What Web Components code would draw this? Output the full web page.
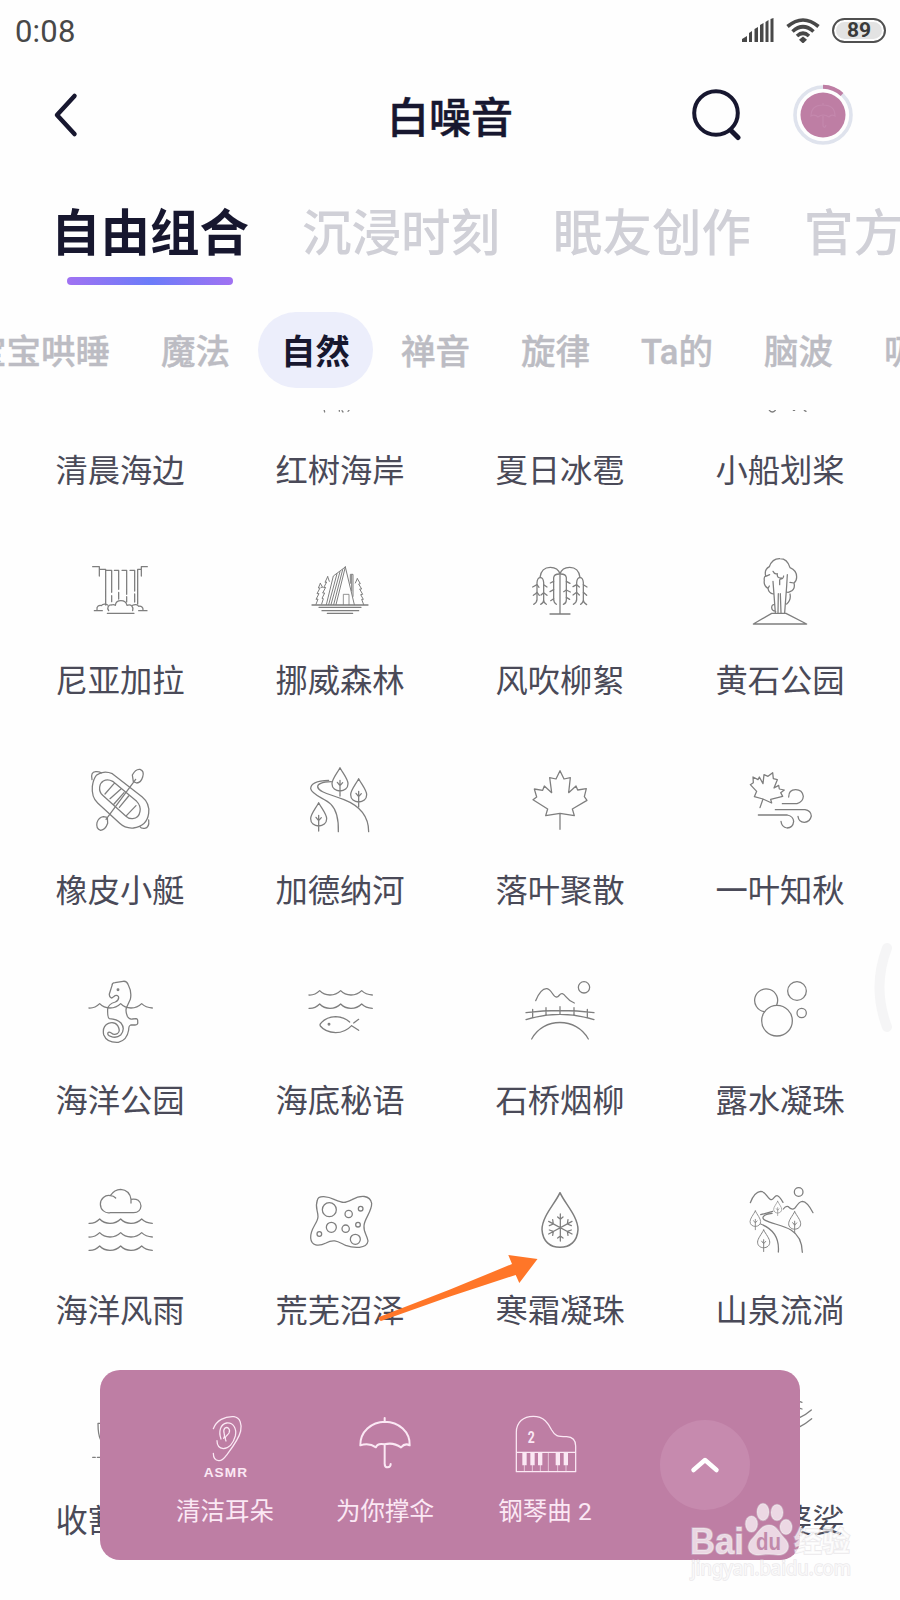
<!DOCTYPE html>
<html lang="zh-CN">
<head>
<meta charset="utf-8">
<title>白噪音</title>
<style>
  body {
    margin: 0;
    width: 900px;
    height: 1600px;
    overflow: hidden;
    background: #fefefe;
    color: #17172f;
    font-family: Roboto, "Noto Sans CJK SC", sans-serif;
  }
</style>
</head>
<body>
<noise-app></noise-app>

<script>
// viewBox origin + drawing, every icon is 240x240 units shown at 80px
const tree = (x, y, s = 1) => `<g transform="translate(${x} ${y}) scale(${s})">
  <path d="M0 0C-8 16-24 34-24 48C-24 62-13 70 0 70S24 62 24 48C24 34 8 16 0 0zM0 38V85M-8 44L0 54L8 45"/></g>`;
const waves = (x, y) => `<path d="M${x} ${y}q18 1 32-13q12 13 31 13t32-13q12 13 31 13t32-13q12 12 32 13"/>`;

const icons = {
  mangrove: ["900 -180", `<path d="M972 28l2 8M1018 28v6M1026 32l3 4M1044 34l3-3"/>`],
  rowing: ["870 -180", `<path d="M958 31q9 10 18 0M1030 31h4M1063 31l5 3"/>`],
  falls: ["240 450", `<path d="M278 500h20v28M298 508h19v107M442 500h-18v28M424 508h-11v104M320 511h15v66M335 587v18M343 511h13v57M356 577v20M366 511h14v72M380 590v16M390 511h14v62M404 582v24"/>
    <path d="M283 632h24M291 630c-2-12 7-15 13-13c5-6 14-5 19-2M326 632c-6-9-1-18 9-17c4-2 8-1 11 1c1-10 8-14 17-14c10 0 16 6 18 14c13-4 20 4 17 16M322 640h80M398 616c6-4 15-3 18 3c8-2 14 4 13 11M416 632h25"/>`],
  cabin: ["900 450", `<path d="M936 615h168M957 622h126M966 632h110M982 640h76"/>
    <path stroke-width="3" d="M1036 501L1063 614M1036 501L1008 614M1036 501L1000 528L979 614M1011 521L986 614M1020 515L993 614M1028 509L1001 614M1051 550v-27h8v66M1055 525v48"/>
    <path stroke-width="2.500" d="M1030 614v-31h17v31"/>
    <path stroke-width="3" d="M983 530l-8 17l5-1l-9 17l6-1l-9 17l6 0l-8 16l4 1l-5 16M961 550l-6 14l5 0l-9 17l6 0l-9 17l6-1l-6 16M983 530l5 14M961 550l7 12l-5 0M1072 536l-6 13M1072 536l9 15l-5 1l9 15l-6 0l9 16l-6 1l8 14l-5 0l6 16"/>`],
  willow: ["210 450", `<path d="M300 642h60M330 642V522M330 522q-6-20-29-20q-27 0-31 30M330 522q6-20 29-20q27 0 31 30"/>
    <path d="M261 600v-52q1-15 10-15t10 15v52q0 8 8 13M261 598q0 10-10 15M281 600q0 9-9 13M311 600v-67q1-11 17-11M311 597q0 11 8 16M349 600v-67q-1-11-17-11M349 600q0 10-9 13M380 600v-52q1-15 10-15t10 15v52q0 8 10 14M380 598q0 10-10 15M400 600q-1 9-8 13"/>
    <path d="M248 561l13-7l6 8M281 554l10 7M250 586q8-5 11-9l7 9M273 585l8-7l10 8M301 549l10-5M300 575l11-6M302 602l9-6M349 544l11 6M341 575l8-5l12 6M349 592l10 6M369 560l11-6l8 7M400 554l11 7M369 585l11-8l8 8M400 577l10 9"/>`],
  geyser: ["870 450", `<path d="M910 672L965 640H1008L1070 672zM976 638L969 544M984 638l1-57M993 638l-2-57M1004 638l6-80l2-34M989 540v14M970 582q-14-3-16-17q-14-8-11-24q-2-10 4-14q-5-18 11-27q9-25 32-24q22 0 30 27q20 8 20 28q0 12-8 18q5 20-12 26q-5 3-10 1M1020 582q4 18-10 30M977 634q-12-1-12-12q1-9 8-8M969 514q4 10 13 7q-2 14 12 13M990 538q9 0 11-10M947 529l12-5M1032 549l-12-2M954 565l4-7"/>`],
  raft: ["90 60", `<path d="M139 106Q160 90 187 101L276 170Q300 190 296 220Q291 258 250 264Q226 266 209 250L143 189Q124 171 127 139Q130 117 139 106z"/>
    <path d="M160 123Q173 116 188 124L260 184Q273 197 270 214Q267 234 248 236Q236 237 227 228L158 166Q147 156 149 141Q151 128 160 123zM165 162L192 131M180 176L212 148M192 192L222 158M208 202L236 168M230 226L258 197"/>
    <path d="M126 119q-5-23 11-24q14-1 16 5M296 240q3 23-12 25q-11 1-14-5M250 125L247 105Q257 86 270 88Q284 93 278 111Q273 128 260 129zM257 118L168 238M172 232L173 250Q166 270 152 271Q137 266 141 248Q146 232 160 230z"/>`],
  river: ["750 60", `${tree(870, 83, 1)}${tree(926, 116, 1)}${tree(806, 188, 1)}
    <path d="M836 121C800 122 782 130 782 146C786 166 824 174 843 193C862 212 866 240 865 275M844 125C815 126 802 132 803 141C807 157 842 163 882 179C930 198 956 230 956 275"/>`],
  maple: ["90 60", `<path d="M210 92L222 117L241 113L236 158L258 138L263 150L289 146L283 170L291 181L247 207L253 227L210 220L167 227L173 207L129 179L140 171L133 147L158 151L163 138L185 158L179 113L198 117zM210 220V268"/>`],
  wind: ["750 60", `<path d="M848 98L850 116L862 119L852 144L866 136L868 147L883 150L872 158L878 169L842 178L845 189L819 177L793 170L800 154L781 134L790 128L789 111L804 119L808 111L819 131L822 104L834 109zM819 177L810 203"/>
    <path d="M877 191H921Q939 186 940 169Q937 149 917 149Q896 149 896 171M856 209H945Q963 212 964 228Q960 246 943 247Q926 246 924 229M805 225H892Q910 229 911 244Q909 263 891 264Q875 261 873 244"/>`],
  seahorse: ["90 90", `<path d="M184 174Q177 170 178 162L186 137Q186 128 195 128L219 124Q230 122 235 135Q246 156 241 178L229 204Q226 215 232 229Q237 239 247 237L258 236Q264 236 263 246Q265 254 255 255H242Q236 257 236 270Q231 301 205 307Q171 309 161 284Q156 259 175 250Q194 244 203 257Q213 274 202 281Q192 286 184 279Q177 275 174 278Q171 286 182 289Q199 296 212 285Q227 267 213 249Q201 237 178 236Q172 233 173 207Q175 192 196 186Q209 179 205 169Q199 163 191 170Q187 174 184 174z"/>
    <circle cx="204" cy="149" r="2.5"/>${waves(117, 204)}`],
  fish: ["750 90", `${waves(777, 165)}${waves(777, 205)}
    <path d="M905 257Q885 278 857 278Q825 276 811 258Q808 253 814 248Q830 231 857 230Q882 231 899 246M911 249L926 238M905 257L926 271"/><circle cx="837" cy="253" r="2.5"/>`],
  bridge: ["90 120", `<path d="M137 212Q153 174 171 176C185 178 188 200 199 201C208 202 208 189 217 191C227 193 229 210 253 219M108 248Q210 235 312 248M108 269Q210 237 312 269M128 238v24M168 233v21M210 230v23M252 233v21M292 238v24M125 327C160 261 259 261 295 327"/><circle cx="282" cy="172" r="17"/>`],
  bubbles: ["750 120", `<circle cx="861" cy="272" r="46"/><path d="M822 245A34.500 34.500 0 1 1 860 225"/><circle cx="921" cy="183" r="28"/><circle cx="935" cy="249" r="14"/>`],
  storm: ["90 60", `<path d="M181 158A25 26 0 1 1 181 107Q193 88 212 88Q239 90 243 118Q271 114 273 138Q271 158 251 158zM181 107Q191 107 197 114M243 118V129"/>${waves(117, 190)}${waves(117, 231)}${waves(117, 271)}`],
  swamp: ["750 60", `<path d="M802 121C804 104 834 109 854 119C880 130 884 130 906 119C931 105 960 104 965 130C966 155 942 177 942 198C940 215 951 226 954 243C951 267 911 265 887 256C865 246 853 235 828 249C805 261 784 257 782 234C780 206 803 190 804 170C804 151 794 142 802 121z"/>
    <circle cx="838" cy="149" r="21"/><circle cx="896" cy="162" r="11"/><circle cx="932" cy="146" r="7"/><circle cx="844" cy="202" r="15"/><circle cx="887" cy="206" r="11"/><circle cx="924" cy="194" r="7"/><circle cx="808" cy="222" r="7"/><circle cx="916" cy="238" r="15"/>`],
  frost: ["90 60", `<path stroke-width="4.500" d="M210 98C196 130 156 169 156 209C158 244 180 262 210 262S262 244 264 209C264 169 224 130 210 98z"/>
    <path d="M211 162V243M176 184L246 222M246 184L176 222M203 171L211 178L219 171M203 234L211 228L219 234M178 197L190 192L188 179M244 197L232 192L234 179M178 210L190 214L188 226M244 210L232 214L234 226"/>`],
  spring: ["750 60", `${tree(863, 124, 0.5)}${tree(796, 153, 0.66)}${tree(914, 155, 0.75)}${tree(821, 210, 0.76)}
    <path d="M781 128Q793 96 812 94C829 94 833 119 845 119C852 118 853 107 861 107Q867 107 879 127M880 147Q888 136 895 140C903 147 907 150 915 144C922 134 928 124 937 124Q952 125 969 158M812 164L848 154M846 160C819 163 812 174 826 181C846 192 879 195 903 210Q936 230 937 277M812 192C847 206 869 230 865 276"/><circle cx="926" cy="96" r="13"/>`],
  reap: ["120 90", `<path d="M174 190Q174 225 182 240M158 292h8M172 292h12M174 190h12"/>`],
  dance: ["810 90", `<path d="M990 125l6 2M990 145l6 2M990 172Q1008 164 1024 150M990 200Q1008 190 1025 176"/>`],
  ear: ["435 135", `<path d="M520 206C529 182 554 168 582 170C601 173 606 193 602 213C596 239 575 265 559 286C549 300 544 303 536 302C524 301 520 294 520 280M543 237C535 215 541 192 560 189C580 187 591 206 586 228C580 250 566 265 550 266C536 264 531 255 531 242M551 235C560 227 545 215 554 205C563 198 572 208 567 219C562 228 551 228 558 243"/>
    <text x="556" y="351" font-size="41" font-family="Liberation Sans" font-weight="700" text-anchor="middle" textLength="130">ASMR</text>`],
  umbrella: ["915 135", `<path stroke-width="6" d="M1034 174v12M961 256C960 216 994 185 1035 185S1111 216 1109 256Q1095 248 1083 262Q1060 246 1034 253Q1012 248 1008 262Q987 247 961 256zM1034 253V311Q1034 322 1043 322Q1052 321 1052 312"/>`],
  piano: ["105 135", `<path d="M139 335V217C139 187 160 169 190 169C222 169 235 190 245 210C255 228 262 230 290 230C308 231 317 240 317 258V335zM139 277H317" /><path stroke-width="2" d="M163 316V335M187 316V335M211 316V335M235 279V335M263 316V335M288 316V335"/>
    <path fill="currentColor" stroke="none" d="M157 279h13v37h-13zM181 279h13v37h-13zM204 279h13v37h-13zM257 279h13v37h-13zM281 279h13v37h-13z"/>
    <text x="173" y="248" font-size="49" font-family="Roboto" font-weight="700" textLength="21" lengthAdjust="spacingAndGlyphs">2</text>`],
};

class LineIcon extends HTMLElement {
  connectedCallback() {
    const [origin, body] = icons[this.getAttribute("name")] || ["0 0", ""];
    this.attachShadow({ mode: "open" }).innerHTML = `
      <style>
        :host { display: block; width: 80px; height: 80px; }
        svg { display: block; overflow: visible; }
        text { fill: currentColor; stroke: none; }
      </style>
      <svg width="80" height="80" viewBox="${origin} 240 240" fill="none" stroke="currentColor"
        stroke-width="3.8" stroke-linecap="round" stroke-linejoin="round">${body}</svg>
    `;
  }
}

class StatusBar extends HTMLElement {
  connectedCallback() {
    this.attachShadow({ mode: "open" }).innerHTML = `
      <style>
        :host {
          display: flex;
          align-items: center;
          box-sizing: border-box;
          height: 60px;
          padding: 0 14px 0 15px;
          color: #484848;
        }
        .time { flex: 1; font-size: 31px; letter-spacing: .2px; padding-top: 3px; }
        .battery {
          box-sizing: border-box;
          width: 54px;
          height: 25px;
          margin-left: 12px;
          border: 2.5px solid #505050;
          border-radius: 12.5px;
          background: #e3e3e3;
          box-shadow: inset 0 0 0 2px #fefefe;
          text-align: center;
          font: 700 21px/20px Roboto;
          color: #3a3a3a;
        }
        .wifi { margin-left: 12px; }
      </style>
      <span class="time">0:08</span>
      <svg width="33" height="24" viewBox="0 0 33 24" fill="#484848">
        <path d="M1 24v-3l5-3v6zM8 24v-9l3-2v11zM13.500 24v-13l3.500-2v15zM19 24v-17l3.500-2v19zM24.500 24v-20l3-2v22zM29.500 24v-23l3-1v24z"/>
      </svg>
      <svg class="wifi" width="34" height="25" viewBox="0 0 34 25" fill="none" stroke="#484848" stroke-width="3.600">
        <path d="M1.500 8.500Q17-4.500 32.500 8.500M6.500 13.500Q17 4 27.500 13.500M11 18Q17 12.500 23 18"/>
        <path d="M17 18.500l4 3.300L17 25.500l-4-3.700z" fill="#484848" stroke="none"/>
      </svg>
      <span class="battery">89</span>
    `;
  }
}

class AppHeader extends HTMLElement {
  connectedCallback() {
    this.attachShadow({ mode: "open" }).innerHTML = `
      <style>
        :host {
          display: grid;
          grid-template-columns: 1fr auto 1fr;
          align-items: center;
          height: 110px;
          padding: 0 46px 0 50px;
        }
        h1 { margin: 0 4px 0 0; padding-top: 7px; font-size: 42px; font-weight: 500; line-height: 60px; -webkit-text-stroke: .5px #17172f; }
        .actions { display: flex; align-items: center; justify-content: flex-end; gap: 49px; }
        svg { display: block; }
      </style>
      <svg width="30" height="46" viewBox="0 0 30 46" fill="none" stroke="#17172f" stroke-width="4.500" stroke-linecap="round" stroke-linejoin="round">
        <path d="M24.500 4L7 23L24.500 42"/>
      </svg>
      <h1><slot></slot></h1>
      <div class="actions">
        <svg width="52" height="52" viewBox="0 0 52 52" fill="none" stroke="#17172f" stroke-width="4" stroke-linecap="round">
          <circle cx="25" cy="24" r="21.800"/><path d="M40.500 42l6.500 6.500" stroke-width="5"/>
        </svg>
        <svg width="62" height="62" viewBox="0 0 62 62" fill="none">
          <circle cx="31" cy="31" r="28" stroke="#dfe3ed" stroke-width="3.600"/>
          <path d="M31 2.700A28.300 28.300 0 0 1 50 10.500" stroke="#be7ea4" stroke-width="4"/>
          <circle cx="31" cy="31" r="22.500" fill="#be7ea4"/>
          <path d="M31 19v2M19 32Q19 21 31 21T43 32Q39 30 37 33Q31 29 26 33Q23 30 19 32zM31 32v10q2 3 3-1" stroke="#c488ad" stroke-width="1.200"/>
        </svg>
      </div>
    `;
  }
}

class TabBar extends HTMLElement {
  connectedCallback() {
    this.attachShadow({ mode: "open" }).innerHTML = `
      <style>
        :host {
          display: flex;
          gap: 53px;
          height: 130px;
          padding: 29px 0 0 51px;
          box-sizing: border-box;
          overflow: hidden;
          white-space: nowrap;
          font-size: 49.500px;
          line-height: 70px;
          font-weight: 500;
          color: #d0d0d7;
        }
        ::slotted(*) { flex: none; }
        ::slotted([active]) { color: #17172f; font-weight: 700; }
      </style>
      <slot></slot>
    `;
  }
}

class TabItem extends HTMLElement {
  connectedCallback() {
    this.attachShadow({ mode: "open" }).innerHTML = `
      <style>
        :host { display: flex; flex-direction: column; align-items: center; }
        i { display: none; width: 166px; height: 8px; margin-top: 8px; border-radius: 4px;
            background: linear-gradient(90deg, #a072f2, #6c7cf9 50%, #a072f2); }
        :host([active]) i { display: block; }
      </style>
      <slot></slot><i></i>
    `;
  }
}

class CategoryBar extends HTMLElement {
  connectedCallback() {
    const items = this.getAttribute("items").split(",");
    const active = this.getAttribute("active");
    this.attachShadow({ mode: "open" }).innerHTML = `
      <style>
        :host { display: block; height: 110px; overflow: hidden; }
        .row { display: flex; gap: 5px; margin: 12px 0 0 -51px; }
        span {
          flex: none;
          height: 76px;
          box-sizing: border-box;
          padding: 2px 23px 0;
          border-radius: 38px;
          font-size: 34.500px;
          font-weight: 500;
          line-height: 76px;
          color: #bcbcc3;
          -webkit-text-stroke: .4px #bcbcc3;
        }
        .active { background: #eceefb; color: #17172f; font-weight: 700; -webkit-text-stroke: 0; }
      </style>
      <div class="row">
        ${items.map((name) => `<span class="${name === active ? "active" : ""}">${name}</span>`).join("")}
      </div>
    `;
  }
}

class SoundItem extends HTMLElement {
  connectedCallback() {
    this.attachShadow({ mode: "open" }).innerHTML = `
      <style>
        :host {
          display: flex;
          flex-direction: column;
          align-items: center;
          height: 210px;
          font-size: 32.300px;
          line-height: 40px;
          white-space: nowrap;
          color: #4a4a58;
        }
        line-icon { color: #7e7e7e; margin-bottom: 31px; }
        span { min-width: 129px; }
      </style>
      <line-icon name="${this.getAttribute("icon")}"></line-icon>
      <span><slot></slot></span>
    `;
  }
}

class SoundGrid extends HTMLElement {
  connectedCallback() {
    this.attachShadow({ mode: "open" }).innerHTML = `
      <style>
        :host { display: block; height: 1190px; overflow: hidden; }
        .grid {
          display: grid;
          grid-template-columns: repeat(4, 220px);
          margin: -70px 0 0 10px;
        }
      </style>
      <div class="grid"><slot></slot></div>
    `;
  }
}

class PlayItem extends HTMLElement {
  connectedCallback() {
    this.attachShadow({ mode: "open" }).innerHTML = `
      <style>
        :host {
          display: flex;
          flex-direction: column;
          align-items: center;
          width: 160px;
          gap: 9px;
          color: #fbe8f4;
          font-size: 24.500px;
          line-height: 36px;
        }
      </style>
      <line-icon name="${this.getAttribute("icon")}"></line-icon>
      <span><slot></slot></span>
    `;
  }
}

class PlayPanel extends HTMLElement {
  connectedCallback() {
    this.attachShadow({ mode: "open" }).innerHTML = `
      <style>
        :host {
          position: absolute;
          left: 100px;
          top: 1370px;
          display: flex;
          box-sizing: border-box;
          width: 700px;
          height: 190px;
          padding: 35px 50px 0 45px;
          border-radius: 20px;
          background: #be7ea4;
        }
        button {
          width: 90px;
          height: 90px;
          margin: 15px 0 0 auto;
          padding: 0;
          border: 0;
          border-radius: 50%;
          background: #c68aae;
        }
        svg { display: block; margin: auto; }
      </style>
      <slot></slot>
      <button>
        <svg width="30" height="18" viewBox="0 0 30 18" fill="none" stroke="#fff" stroke-width="4.500" stroke-linecap="round" stroke-linejoin="round">
          <path d="M3.500 14L15 4L26.500 14"/>
        </svg>
      </button>
    `;
  }
}

// arrow, edge handle and watermark float above the page
class OverlayMarks extends HTMLElement {
  connectedCallback() {
    this.attachShadow({ mode: "open" }).innerHTML = `
      <style>
        :host { position: absolute; left: 0; top: 0; pointer-events: none; }
        svg { display: block; }
      </style>
      <svg width="900" height="1600" viewBox="0 0 900 1600" fill="none">
        <path d="M887 948Q872 987 887 1027" stroke="#f5f5f6" stroke-width="10" stroke-linecap="round"/>
        <path d="M379 1317L450 1289.500L512 1264L508.300 1255L537.500 1259L519.300 1283L515.700 1275L450 1296.500L381 1321Q378 1320 379 1317z" fill="#ff7628"/>
        <g fill="#fff" fill-opacity=".7" stroke="#d8d4d8" stroke-opacity=".5" stroke-width="1.600" paint-order="stroke">
          <text x="690" y="1553.500" font-family="Liberation Sans" font-size="36" font-weight="700" textLength="54" lengthAdjust="spacingAndGlyphs">Bai</text>
          <ellipse cx="751.500" cy="1524" rx="6" ry="8"/>
          <ellipse cx="763" cy="1512" rx="6" ry="8.500"/>
          <ellipse cx="777" cy="1512.500" rx="6" ry="8"/>
          <ellipse cx="786" cy="1527" rx="6" ry="7.500"/>
          <path d="M769 1525C777 1525 779 1533 786 1540C792 1548 786 1555 778 1555C772 1554 766 1554 760 1555C750 1556 745 1548 751 1540C758 1533 761 1525 769 1525z"/>
          <text x="794" y="1552" font-family="Noto Sans CJK SC" font-size="28" font-weight="700" textLength="56">经验</text>
          <text x="691" y="1575" font-family="Noto Sans" font-size="19.500" textLength="160" lengthAdjust="spacingAndGlyphs">jingyan.baidu.com</text>
        </g>
        <text x="756" y="1550" font-family="Liberation Sans" font-size="23" font-weight="700" fill="#c18aab" textLength="25" lengthAdjust="spacingAndGlyphs">du</text>
      </svg>
    `;
  }
}

class NoiseApp extends HTMLElement {
  connectedCallback() {
    const sounds = [
      ["", "清晨海边"], ["mangrove", "红树海岸"], ["", "夏日冰雹"], ["rowing", "小船划桨"],
      ["falls", "尼亚加拉"], ["cabin", "挪威森林"], ["willow", "风吹柳絮"], ["geyser", "黄石公园"],
      ["raft", "橡皮小艇"], ["river", "加德纳河"], ["maple", "落叶聚散"], ["wind", "一叶知秋"],
      ["seahorse", "海洋公园"], ["fish", "海底秘语"], ["bridge", "石桥烟柳"], ["bubbles", "露水凝珠"],
      ["storm", "海洋风雨"], ["swamp", "荒芜沼泽"], ["frost", "寒霜凝珠"], ["spring", "山泉流淌"],
      ["reap", "收割"], ["", ""], ["", ""], ["dance", "树影婆娑"],
    ];

    this.attachShadow({ mode: "open" }).innerHTML = `
      <style>
        :host { display: block; position: relative; width: 900px; height: 1600px; overflow: hidden; }
      </style>
      <status-bar></status-bar>
      <app-header>白噪音</app-header>
      <tab-bar>
        <tab-item active>自由组合</tab-item>
        <tab-item>沉浸时刻</tab-item>
        <tab-item>眠友创作</tab-item>
        <tab-item>官方</tab-item>
      </tab-bar>
      <category-bar items="宝宝哄睡,魔法,自然,禅音,旋律,Ta的,脑波,吸" active="自然"></category-bar>
      <sound-grid>
        ${sounds.map(([icon, name]) => `<sound-item icon="${icon}">${name}</sound-item>`).join("")}
      </sound-grid>
      <play-panel>
        <play-item icon="ear">清洁耳朵</play-item>
        <play-item icon="umbrella">为你撑伞</play-item>
        <play-item icon="piano">钢琴曲 2</play-item>
      </play-panel>
      <overlay-marks></overlay-marks>
    `;
  }
}

customElements.define("line-icon", LineIcon);
customElements.define("status-bar", StatusBar);
customElements.define("app-header", AppHeader);
customElements.define("tab-bar", TabBar);
customElements.define("tab-item", TabItem);
customElements.define("category-bar", CategoryBar);
customElements.define("sound-item", SoundItem);
customElements.define("sound-grid", SoundGrid);
customElements.define("play-item", PlayItem);
customElements.define("play-panel", PlayPanel);
customElements.define("overlay-marks", OverlayMarks);
customElements.define("noise-app", NoiseApp);
</script>
</body>
</html>
